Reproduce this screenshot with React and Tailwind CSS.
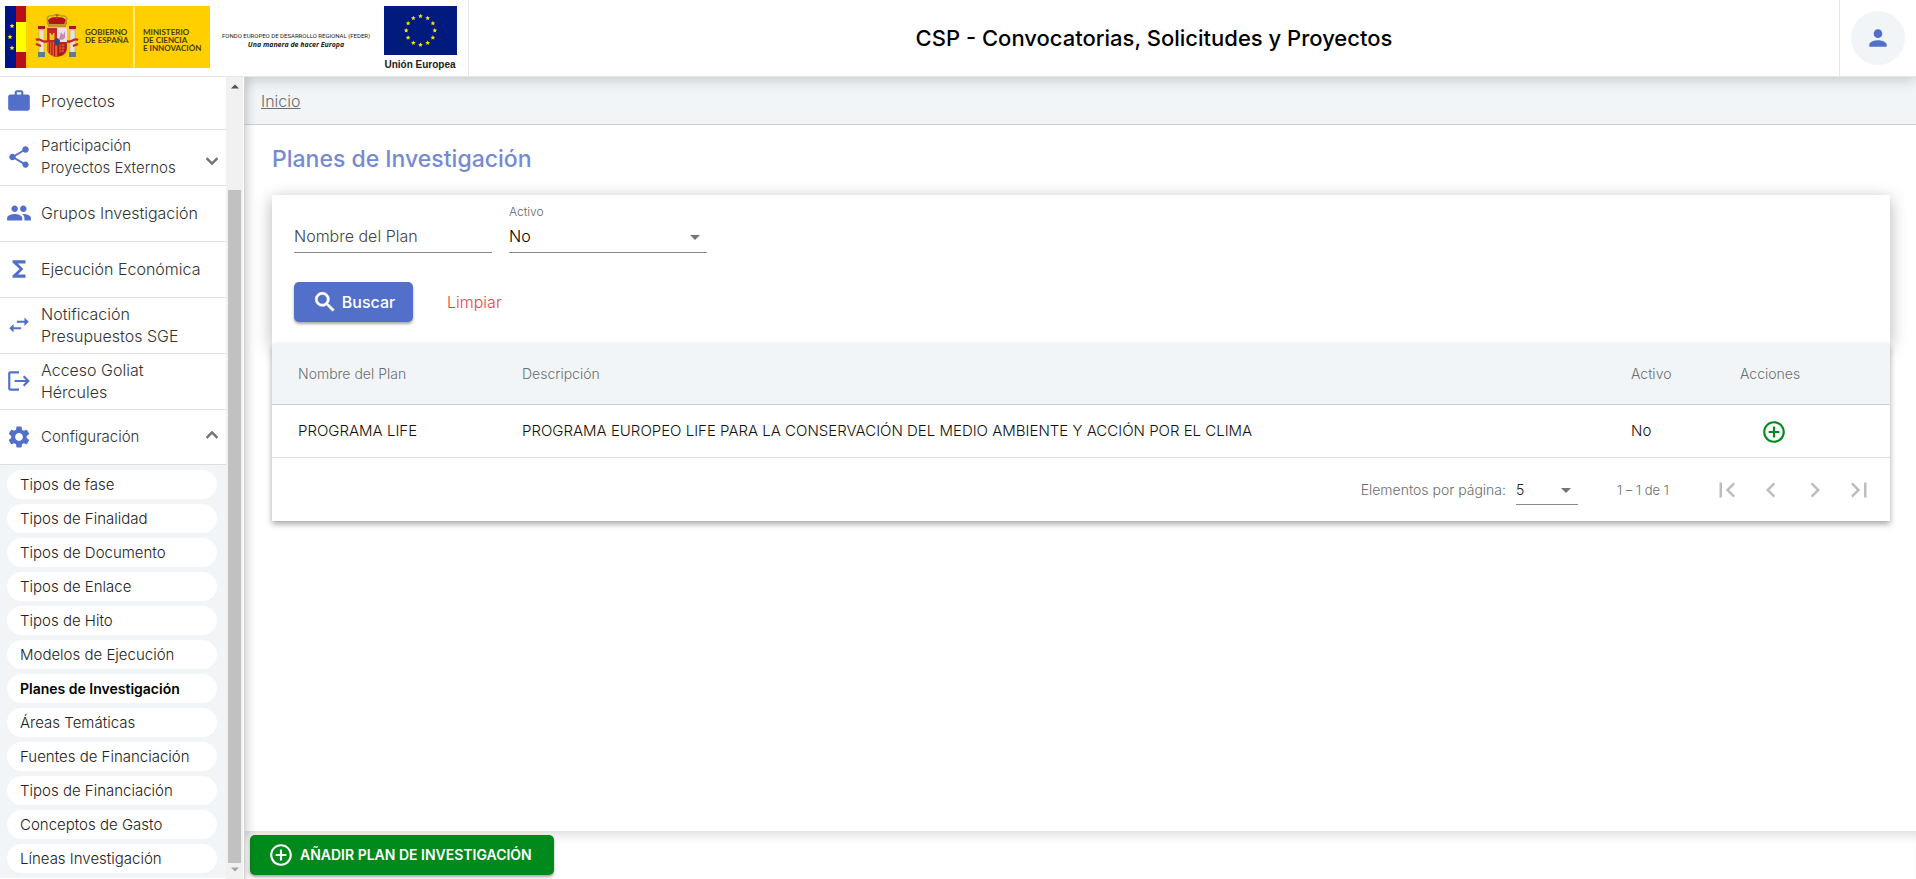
import React from "react";
import {
  MdWork, MdShare, MdPeople, MdFunctions, MdSwapHoriz, MdLogout, MdSettings,
  MdAddCircleOutline, MdFirstPage, MdLastPage, MdChevronLeft, MdChevronRight, MdArrowDropDown, MdPerson,
} from "react-icons/md";

const star = (cx, cy, r) =>
  Array.from({ length: 10 }, (_, i) => {
    const a = (Math.PI / 5) * i - Math.PI / 2;
    const k = i % 2 ? r * 0.45 : r;
    return `${(cx + k * Math.cos(a)).toFixed(2)},${(cy + k * Math.sin(a)).toFixed(2)}`;
  }).join(" ");

function BoldIcon({ d, className }) {
  return (
    <svg viewBox="0 0 24 24" className={className} fill="currentColor" stroke="currentColor" strokeWidth="0.6" aria-hidden="true">
      <path d={d} />
    </svg>
  );
}
const SEARCH = "M15.500 14h-.79l-.28-.27A6.471 6.471 0 0 0 16 9.500 6.500 6.500 0 1 0 9.500 16c1.610 0 3.090-.59 4.230-1.570l.27.28v.79l5 4.990L20.490 19l-4.990-5zm-6 0C7.010 14 5 11.990 5 9.500S7.010 5 9.500 5 14 7.010 14 9.500 11.990 14 9.500 14z";
const DOWN = "M16.590 8.590L12 13.170 7.410 8.590 6 10l6 6 6-6z";
const UP = "M12 8l-6 6 1.410 1.410L12 10.830l4.590 4.580L18 14z";

function GobiernoLogo() {
  return (
    <svg width="205" height="62" viewBox="0 0 205 62" role="img" aria-label="Gobierno de España">
      <rect width="205" height="62" fill="#ffcf00" />
      <rect width="11" height="62" fill="#00148a" />
      <rect x="11" width="10" height="62" fill="#b91016" />
      <rect x="11" y="16" width="10" height="30" fill="#ffff00" />
      {[[7, 20], [5, 31], [7, 42]].map(([x, y]) => <polygon key={y} points={star(x, y, 2.6)} fill="#ffe600" />)}
      <rect x="128" width="2" height="62" fill="#ffe680" />
      <g>
        <path d="M43 19c-2-5 1-8 9-8s11 3 9 8z" fill="#b5121b" />
        <path d="M42 13c0-3 4-4 6-3 1-2 7-2 8 0 3-1 6 1 6 3l-3 7H44z" fill="none" stroke="#b89a3a" strokeWidth="1.4" />
        <path d="M52 8v5M50.500 9.500h3" stroke="#8b6a1e" strokeWidth="1" />
        <rect x="43" y="18" width="18" height="3" fill="#c4962c" />
        <rect x="34" y="24" width="5" height="26" fill="#e8e3d5" stroke="#a99" strokeWidth=".5" />
        <rect x="65" y="24" width="5" height="26" fill="#e8e3d5" stroke="#a99" strokeWidth=".5" />
        <rect x="33" y="20" width="7" height="3" fill="#b5121b" />
        <rect x="64" y="20" width="7" height="3" fill="#b5121b" />
        <rect x="33" y="46" width="7" height="5" fill="#5b7f8c" />
        <rect x="64" y="46" width="7" height="5" fill="#5b7f8c" />
        <path d="M31 34c4-3 7 4 11 1M73 34c-4-3-7 4-11 1M31 38l5 2M73 38l-5 2" stroke="#c0272d" strokeWidth="2.200" fill="none" />
        <path d="M42 22h20v19c0 7-4 9-10 10-6-1-10-3-10-10z" fill="#c8242b" />
        <path d="M52 22h10v14H52z" fill="#f1dfe3" />
        <path d="M54 33l2-7 2 3 2-4v7l-3 2z" fill="#c58ab0" />
        <path d="M44.500 34v-7h1.500v1.500h2V27h1.500v7z" fill="#f0c419" />
        <path d="M42 36h10v15c-6-1-10-3-10-10z" fill="#dc6b1c" />
        <path d="M44.500 36v11M47 36v13M49.500 36v14.500" stroke="#b5121b" strokeWidth="1.200" />
        <path d="M53 37h8v5c0 4-3 7-8 8z" fill="#b5121b" />
        <path d="M55 39h5M54 42h6M55 45h4M55 39v8M58 38v8" stroke="#e0912b" strokeWidth=".6" />
        <ellipse cx="52" cy="36" rx="2.800" ry="3.500" fill="#1d4c8c" stroke="#a33" strokeWidth=".8" />
      </g>
      <g fill="#4a3b00" fontFamily="Lato, sans-serif" fontWeight="700" fontSize="8">
        <text x="80" y="29">GOBIERNO</text>
        <text x="80" y="37">DE ESPAÑA</text>
        <text x="138" y="29">MINISTERIO</text>
        <text x="138" y="37">DE CIENCIA</text>
        <text x="138" y="45">E INNOVACIÓN</text>
      </g>
    </svg>
  );
}

function EuropeLogo() {
  return (
    <div className="flex w-[74px] flex-col items-center">
      <svg width="73" height="49" viewBox="0 0 73 49" aria-hidden="true">
        <rect width="73" height="49" fill="#001a7e" />
        {Array.from({ length: 12 }, (_, i) => {
          const a = (Math.PI / 6) * i;
          return <polygon key={i} points={star(36.5 + 14.3 * Math.sin(a), 24.5 - 14.3 * Math.cos(a), 2.5)} fill="#f2ea00" />;
        })}
      </svg>
      <span className="mt-0.5 whitespace-nowrap font-['Liberation_Sans',sans-serif] text-[10px] leading-4 font-bold text-[#222]">Unión Europea</span>
    </div>
  );
}

const menu = [
  { Icon: MdShare, label: "Participación Proyectos Externos", more: true },
  { Icon: MdPeople, label: "Grupos Investigación" },
  { Icon: MdFunctions, label: "Ejecución Económica" },
  { Icon: MdSwapHoriz, label: "Notificación Presupuestos SGE" },
  { Icon: MdLogout, label: "Acceso Goliat Hércules" },
];

const config = [
  "Tipos de fase", "Tipos de Finalidad", "Tipos de Documento", "Tipos de Enlace", "Tipos de Hito", "Modelos de Ejecución",
  "Planes de Investigación", "Áreas Temáticas", "Fuentes de Financiación", "Tipos de Financiación", "Conceptos de Gasto", "Líneas Investigación",
];

function Sidebar() {
  return (
    <aside className="relative z-20 flex w-[245px] shrink-0 border-r border-[#d2d2d2] bg-white shadow-[2px_0_10px_rgba(0,0,0,0.2)]">
      <nav className="w-[226px] text-base leading-[22px] text-[#333]">
        <a href="#proyectos" className="flex h-[53px] items-center gap-[9px] border-b border-[#dedede] px-1.5 pb-1">
          <MdWork className="size-[26px] shrink-0 text-[#5270ca]" />
          Proyectos
        </a>
        {menu.map(({ Icon, label, more }) => (
          <a key={label} href="#menu" className="flex h-14 items-center gap-[9px] border-b border-[#dedede] px-1.5 pb-0.5">
            <Icon className="size-[26px] shrink-0 text-[#5270ca]" />
            <span className={more ? "w-[140px] text-[15px]" : label.length > 20 ? "w-[150px]" : "whitespace-nowrap"}>{label}</span>
            {more && <BoldIcon d={DOWN} className="mt-2 -mr-1 ml-auto size-6 shrink-0 text-[#757575]" />}
          </a>
        ))}
        <button type="button" className="flex h-[55px] w-full items-center gap-[9px] border-b border-[#dedede] px-1.5 text-left text-[15px]">
          <MdSettings className="size-[26px] shrink-0 text-[#5270ca]" />
          Configuración
          <BoldIcon d={UP} className="-mr-1 mb-1 ml-auto size-6 shrink-0 text-[#757575]" />
        </button>
        <ul className="flex flex-col gap-[5px] bg-[#f1f5f8] px-[7px] py-[5px]">
          {config.map((item) => (
            <li key={item}>
              <a
                href="#config"
                className={
                  item === "Planes de Investigación"
                    ? "flex h-[29px] w-[210px] items-center rounded-full bg-white px-[13px] text-sm font-semibold text-black"
                    : "flex h-[29px] w-[210px] items-center rounded-full bg-white px-[13px] text-[15px] text-[#222]"
                }
              >
                {item}
              </a>
            </li>
          ))}
        </ul>
      </nav>
      <div className="flex w-[17px] flex-col items-center bg-[#f1f1f1] py-[7px]" aria-hidden="true">
        <svg width="8" height="5" viewBox="0 0 8 5"><path d="M0 4.500L4 .5l4 4z" fill="#505050" /></svg>
        <div className="mt-[101px] mb-[4px] w-[13px] flex-1 bg-[#c1c1c1]" />
        <svg width="8" height="5" viewBox="0 0 8 5"><path d="M0 .5l4 4 4-4z" fill="#a3a3a3" /></svg>
      </div>
    </aside>
  );
}

function Filters() {
  return (
    <form className="bg-white px-[22px] pt-2 pb-[22px] shadow-[0_4px_16px_rgba(0,0,0,0.3)]">
      <div className="flex gap-[17px]">
        <div className="flex w-[198px] flex-col justify-end">
          <input
            aria-label="Nombre del Plan"
            placeholder="Nombre del Plan"
            className="h-8 w-full border-b border-[#8a8a8a] bg-transparent pb-0.5 outline-none placeholder:text-[#444] placeholder:opacity-100"
          />
        </div>
        <div className="w-[198px]">
          <label htmlFor="activo" className="block text-xs leading-[18px] text-[#666]">Activo</label>
          <div className="grid items-center border-b border-[#8a8a8a]">
            <select id="activo" className="col-start-1 row-start-1 h-[31px] w-full appearance-none bg-transparent pb-0.5 text-black outline-none">
              <option>No</option>
              <option>Sí</option>
            </select>
            <MdArrowDropDown className="pointer-events-none col-start-1 row-start-1 size-6 justify-self-end text-[#757575]" />
          </div>
        </div>
      </div>
      <div className="mt-[29px] flex items-center gap-[18px]">
        <button type="button" className="flex h-10 w-[119px] items-center justify-center gap-1 rounded-[5px] bg-[#5270ca] font-medium text-white shadow-[0_2px_3px_rgba(0,0,0,0.35)]">
          <BoldIcon d={SEARCH} className="size-[26px]" />
          Buscar
        </button>
        <button type="button" className="h-10 px-4 text-[#ee3f3f]">Limpiar</button>
      </div>
    </form>
  );
}

function Results() {
  return (
    <section className="relative bg-white shadow-[0_3px_6px_rgba(0,0,0,0.35)]">
      <table className="w-full table-fixed border-collapse text-left">
        <colgroup>
          <col className="w-[250px]" />
          <col />
          <col className="w-[109px]" />
          <col className="w-[150px]" />
        </colgroup>
        <thead>
          <tr className="h-[60px] border-b border-[#d0d3d6] bg-[#f1f5f8] text-sm text-[#6c6e70]">
            <th className="pl-[26px] font-light">Nombre del Plan</th>
            <th className="font-light">Descripción</th>
            <th className="font-light">Activo</th>
            <th className="font-light">Acciones</th>
          </tr>
        </thead>
        <tbody>
          <tr className="h-[53px] border-b border-[#dedede] text-[15px] text-[#111]">
            <td className="pt-0.5 pl-[26px]">PROGRAMA LIFE</td>
            <td className="pt-0.5">PROGRAMA EUROPEO LIFE PARA LA CONSERVACIÓN DEL MEDIO AMBIENTE Y ACCIÓN POR EL CLIMA</td>
            <td className="pt-0.5">No</td>
            <td className="pt-0.5">
              <button type="button" aria-label="Añadir" className="ml-[21px] flex size-[26px] items-center justify-center text-[#008a1c]">
                <MdAddCircleOutline className="size-[26px]" />
              </button>
            </td>
          </tr>
        </tbody>
      </table>
      <div className="flex h-[63px] items-center justify-end pt-0.5 pr-[9px] text-sm text-[#6c6c6c]">
        <label htmlFor="size" className="mr-2.5">Elementos por página:</label>
        <div className="grid w-[62px] items-center border-b border-[#8a8a8a]">
          <select id="size" className="col-start-1 row-start-1 h-7 w-full appearance-none bg-transparent text-[#222] outline-none">
            <option>5</option>
            <option>10</option>
          </select>
          <MdArrowDropDown className="pointer-events-none col-start-1 row-start-1 size-6 justify-self-end text-[#757575]" />
        </div>
        <span className="ml-[39px] w-[88px] text-[13px]">1 – 1 de 1</span>
        <div className="flex text-[#bdbdbd]">
          <button type="button" aria-label="Primera página" className="flex h-10 w-11 items-center justify-center"><MdFirstPage className="size-[30px]" /></button>
          <button type="button" aria-label="Página anterior" className="flex h-10 w-11 items-center justify-center"><MdChevronLeft className="size-[30px]" /></button>
          <button type="button" aria-label="Página siguiente" className="flex h-10 w-11 items-center justify-center"><MdChevronRight className="size-[30px]" /></button>
          <button type="button" aria-label="Última página" className="flex h-10 w-11 items-center justify-center"><MdLastPage className="size-[30px]" /></button>
        </div>
      </div>
    </section>
  );
}

export default function App() {
  return (
    <div className="flex h-screen flex-col bg-white font-[Inter,'Open_Sans',sans-serif] text-base font-light text-[#222]">
      <header className="relative z-10 flex h-[77px] shrink-0 border-b border-[#e6e7ec] bg-white shadow-[0_2px_14px_rgba(0,0,0,0.2)]">
        <div className="flex w-[469px] shrink-0 items-start border-r border-[#e6e7ec] pt-1.5 pl-[5px]">
          <GobiernoLogo />
          <div className="ml-3 mt-[26px] w-[148px] text-center font-[Roboto,sans-serif] whitespace-nowrap text-[#222]">
            <p className="text-[6px] leading-2 font-normal">FONDO EUROPEO DE DESARROLLO REGIONAL (FEDER)</p>
            <p className="font-['Open_Sans',sans-serif] text-[7px] leading-[9px] font-bold italic">Una manera de hacer Europa</p>
          </div>
          <div className="ml-[13px]"><EuropeLogo /></div>
        </div>
        <h1 className="flex flex-1 items-center justify-center text-[22px] font-medium text-black">CSP - Convocatorias, Solicitudes y Proyectos</h1>
        <div className="flex w-[77px] shrink-0 items-center justify-center border-l border-[#e6e7ec]">
          <button type="button" aria-label="Usuario" className="flex size-[54px] items-center justify-center rounded-full bg-[#f1f5f8] text-[#5270ca]">
            <MdPerson className="size-[26px]" />
          </button>
        </div>
      </header>
      <div className="flex min-h-0 flex-1 overflow-hidden">
        <Sidebar />
        <main className="flex min-w-0 flex-1 flex-col">
          <nav className="flex h-12 shrink-0 items-center border-b border-[#d0d3d6] bg-[#f1f5f8] px-4">
            <a href="#inicio" className="text-[#6c6c6c] underline">Inicio</a>
          </nav>
          <div className="flex-1 pt-[18px] pr-[26px] pl-[27px]">
            <h2 className="mb-5 text-[23px] leading-8 font-medium text-[#7589d4]">Planes de Investigación</h2>
            <Filters />
            <Results />
          </div>
          <footer className="shrink-0 bg-white px-[5px] py-1 shadow-[inset_0_12px_12px_-8px_rgba(0,0,0,0.14)]">
            <button type="button" className="flex h-10 items-center gap-1.5 rounded-[5px] bg-[#008a1c] px-[18px] text-sm font-semibold text-white shadow-[0_2px_3px_rgba(0,0,0,0.35)]">
              <MdAddCircleOutline className="size-[26px]" />
              <span className="pr-1">AÑADIR PLAN DE INVESTIGACIÓN</span>
            </button>
          </footer>
        </main>
      </div>
    </div>
  );
}
